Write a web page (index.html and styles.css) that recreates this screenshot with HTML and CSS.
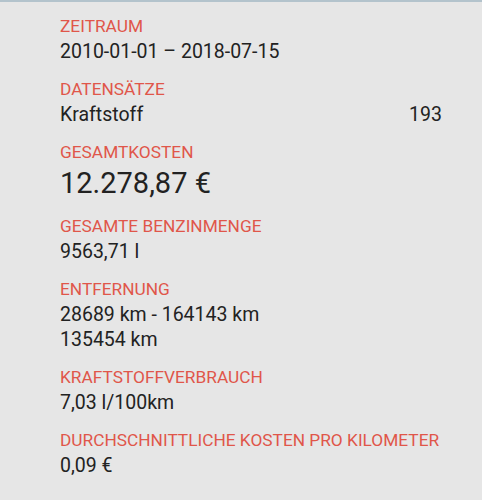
FILE: index.html
```html
<!DOCTYPE html>
<html lang="de">
<head>
    <meta charset="UTF-8">
    <meta name="viewport" content="width=device-width, initial-scale=1.0">
    <title>Statistik</title>
    <link rel="stylesheet" href="styles.css">
</head>
<body>
    <div class="statistik">
        <div class="feld">
            <div class="titel">Zeitraum</div>
            <div class="wert">2010-01-01 – 2018-07-15</div>
        </div>
        <div class="feld">
            <div class="titel">Datensätze</div>
            <div class="wert zeile">
                <span>Kraftstoff</span>
                <span>193</span>
            </div>
        </div>
        <div class="feld">
            <div class="titel">Gesamtkosten</div>
            <div class="wert gross">12.278,87 €</div>
        </div>
        <div class="feld">
            <div class="titel">Gesamte Benzinmenge</div>
            <div class="wert">9563,71 l</div>
        </div>
        <div class="feld">
            <div class="titel">Entfernung</div>
            <div class="wert">28689 km - 164143 km</div>
            <div class="wert">135454 km</div>
        </div>
        <div class="feld">
            <div class="titel">Kraftstoffverbrauch</div>
            <div class="wert">7,03 l/100km</div>
        </div>
        <div class="feld">
            <div class="titel">Durchschnittliche Kosten pro Kilometer</div>
            <div class="wert">0,09 €</div>
        </div>
    </div>
</body>
</html>
```

FILE: styles.css
```css
body {
    margin: 0;
    font-family: Roboto, "Noto Sans", sans-serif;
    background-color: #e6e6e6;
    border-top: 2px solid #b3c3cc;
    height: 498px;
}
.statistik {
    padding: 12px 40px 0 60px;
    display: flex;
    flex-direction: column;
    gap: 13px;
}
.titel {
    color: #e0564a;
    font-size: 17.3px;
    line-height: 25px;
    text-transform: uppercase;
}
.wert {
    color: #222;
    font-size: 19.5px;
    line-height: 25px;
}
.wert.gross {
    font-size: 29px;
    line-height: 36px;
}
.zeile {
    display: flex;
    justify-content: space-between;
}
```
